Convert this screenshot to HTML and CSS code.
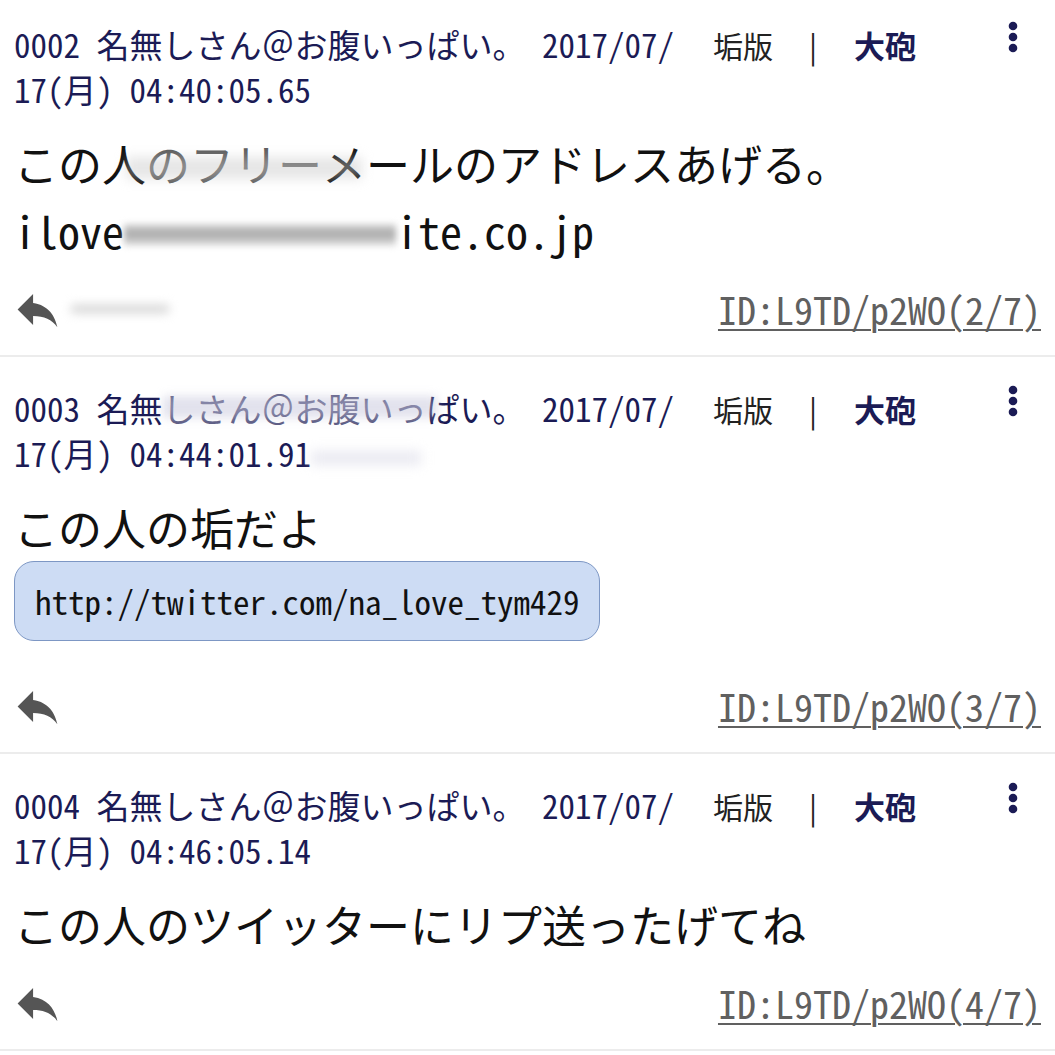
FILE: index.html
```html
<!DOCTYPE html>
<html lang="ja">
<head>
<meta charset="utf-8">
<link rel="stylesheet" href="styles.css">
</head>
<body>
<div class="thread">
  <article class="post post-first">
    <header class="post-head">
      <div class="meta">
        <span class="line">0002 名無しさん＠お腹いっぱい。 2017/07/</span>
        <span class="line">17(月) 04:40:05.65</span>
      </div>
      <nav class="links">
        <span class="link-plain">垢版</span>
        <span class="sep">|</span>
        <span class="link-bold">大砲</span>
      </nav>
      <svg class="kebab" viewBox="0 0 12 36" width="12" height="36"><circle cx="6" cy="7" r="4.3"/><circle cx="6" cy="18" r="4.3"/><circle cx="6" cy="29" r="4.3"/></svg>
    </header>
    <div class="body">
      <p class="line">この人<span class="smear-text">のフリー</span>メールのアドレスあげる。</p>
      <p class="line">ilove<span class="hidden-bar"></span>ite.co.jp</p>
    </div>
    <footer class="post-foot">
      <div class="foot-left">
        <svg class="reply" viewBox="0 0 24 24" width="53" height="53"><path d="M10 9V5l-7 7 7 7v-4.1c5 0 8.5 1.6 11 5.1-1-5-4-10-11-11z"/></svg>
        <span class="foot-blur"></span>
      </div>
      <span class="id">ID:L9TD/p2WO(2/7)</span>
    </footer>
  </article>

  <article class="post">
    <header class="post-head">
      <div class="meta">
        <span class="line">0003 名無<span class="smear-head">しさん＠お腹いっ</span>ぱい。 2017/07/</span>
        <span class="line">17(月) 04:44:01.91<span class="tail-blur"></span></span>
      </div>
      <nav class="links">
        <span class="link-plain">垢版</span>
        <span class="sep">|</span>
        <span class="link-bold">大砲</span>
      </nav>
      <svg class="kebab" viewBox="0 0 12 36" width="12" height="36"><circle cx="6" cy="7" r="4.3"/><circle cx="6" cy="18" r="4.3"/><circle cx="6" cy="29" r="4.3"/></svg>
    </header>
    <div class="body">
      <p class="line">この人の垢だよ</p>
      <div class="url-box">http://twitter.com/na_love_tym429</div>
    </div>
    <footer class="post-foot">
      <div class="foot-left">
        <svg class="reply" viewBox="0 0 24 24" width="53" height="53"><path d="M10 9V5l-7 7 7 7v-4.1c5 0 8.5 1.6 11 5.1-1-5-4-10-11-11z"/></svg>
      </div>
      <span class="id">ID:L9TD/p2WO(3/7)</span>
    </footer>
  </article>

  <article class="post">
    <header class="post-head">
      <div class="meta">
        <span class="line">0004 名無しさん＠お腹いっぱい。 2017/07/</span>
        <span class="line">17(月) 04:46:05.14</span>
      </div>
      <nav class="links">
        <span class="link-plain">垢版</span>
        <span class="sep">|</span>
        <span class="link-bold">大砲</span>
      </nav>
      <svg class="kebab" viewBox="0 0 12 36" width="12" height="36"><circle cx="6" cy="7" r="4.3"/><circle cx="6" cy="18" r="4.3"/><circle cx="6" cy="29" r="4.3"/></svg>
    </header>
    <div class="body">
      <p class="line">この人のツイッターにリプ送ったげてね</p>
    </div>
    <footer class="post-foot">
      <div class="foot-left">
        <svg class="reply" viewBox="0 0 24 24" width="53" height="53"><path d="M10 9V5l-7 7 7 7v-4.1c5 0 8.5 1.6 11 5.1-1-5-4-10-11-11z"/></svg>
      </div>
      <span class="id">ID:L9TD/p2WO(4/7)</span>
    </footer>
  </article>
</div>
</body>
</html>
```

FILE: styles.css
```css
html, body {
  margin: 0;
  padding: 0;
  background: #ffffff;
}

body {
  width: 1055px;
  height: 1055px;
  overflow: hidden;
  font-family: "Noto Sans Mono CJK JP", "Noto Sans CJK JP", "DejaVu Sans Mono", monospace;
  color: #111111;
}

.thread {
  display: flex;
  flex-direction: column;
}

.post {
  padding: 29px 14px 21px 14px;
  border-bottom: 2px solid #ececec;
  display: flex;
  flex-direction: column;
}

.post-first {
  padding-top: 22px;
}

.post-head {
  display: flex;
  align-items: flex-start;
}

.meta {
  flex: 0 0 699px;
  display: flex;
  flex-direction: column;
  font-size: 33px;
  line-height: 45px;
  color: #1b1b55;
}

.meta .line {
  white-space: pre;
}

.links {
  display: flex;
  align-items: center;
  height: 45px;
  font-size: 30px;
  font-family: "Noto Sans CJK JP", sans-serif;
}

.link-plain {
  color: #222222;
}

.sep {
  color: #222222;
  margin-left: 36px;
  margin-right: 37px;
}

.link-bold {
  color: #1b1b55;
  font-weight: 700;
  font-size: 31px;
}

.kebab {
  margin-left: auto;
  margin-right: 22px;
  margin-top: -3px;
  fill: #1b1b55;
}

.body {
  margin-top: 18px;
  display: flex;
  flex-direction: column;
  align-items: flex-start;
}

.body .line {
  margin: 0;
  font-size: 44px;
  line-height: 67px;
  white-space: pre;
  color: #111111;
}

.smear-text {
  position: relative;
  color: #5c5c5c;
}

.smear-text::after {
  content: "";
  position: absolute;
  left: -20px;
  right: -40px;
  top: 26px;
  height: 22px;
  background: rgba(200, 200, 200, 0.45);
  filter: blur(6px);
}

.hidden-bar {
  display: inline-block;
  width: 272px;
  height: 22px;
  margin-bottom: 4px;
  background: linear-gradient(180deg, #d9d9d9 0%, #a9a9a9 45%, #c2c2c2 70%, #e6e6e6 100%);
  filter: blur(3px);
  vertical-align: middle;
}

.smear-head {
  position: relative;
  color: #5a5a82;
}

.smear-head::after {
  content: "";
  position: absolute;
  left: 0;
  right: -10px;
  top: 12px;
  height: 22px;
  background: rgba(190, 190, 215, 0.45);
  filter: blur(5px);
}

.tail-blur {
  display: inline-block;
  width: 110px;
  height: 14px;
  background: rgba(225, 225, 235, 0.7);
  filter: blur(6px);
  vertical-align: middle;
}

.url-box {
  margin-top: 0;
  margin-bottom: 20px;
  padding: 15px 19px 15px 20px;
  font-size: 33px;
  line-height: 48px;
  color: #111111;
  background: #cddcf4;
  border: 1.5px solid #7d97c4;
  border-radius: 20px;
  white-space: pre;
}

.post-foot {
  margin-top: 20px;
  height: 50px;
  display: flex;
  align-items: center;
  justify-content: space-between;
}

.foot-left {
  display: flex;
  align-items: center;
}

.reply {
  fill: #555555;
  margin-left: -3px;
}

.foot-blur {
  display: inline-block;
  width: 100px;
  height: 10px;
  margin-left: 6px;
  background: #dcdcdc;
  border-radius: 6px;
  filter: blur(5px);
}

.id {
  font-size: 38px;
  line-height: 50px;
  color: #606060;
  text-decoration: underline;
  text-decoration-thickness: 2px;
  text-underline-offset: 4px;
  white-space: pre;
}
```
